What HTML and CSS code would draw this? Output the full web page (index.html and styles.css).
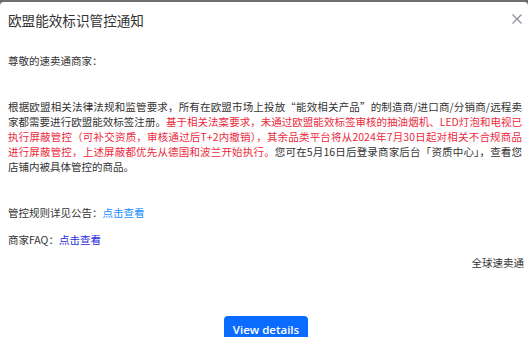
FILE: index.html
```html
<!DOCTYPE html>
<html lang="zh-CN">
<head>
<meta charset="utf-8">
<link rel="stylesheet" href="styles.css">
</head>
<body>
<div class="dialog">
  <div class="header">
    <div class="title">欧盟能效标识管控通知</div>
    <svg class="close" width="10" height="10" viewBox="0 0 10 10"><path d="M0.5 0.5 L9.5 9.5 M9.5 0.5 L0.5 9.5" stroke="#8c9099" stroke-width="1.2" fill="none"/></svg>
  </div>
  <div class="content">
    <p class="greet">尊敬的速卖通商家：</p>
    <p class="para">根据欧盟相关法律法规和监管要求，所有在欧盟市场上投放“能效相关产品”的制造商/进口商/分销商/远程卖家都需要进行欧盟能效标签注册。<span class="red">基于相关法案要求，未通过欧盟能效标签审核的抽油烟机、LED灯泡和电视已执行屏蔽管控（可补交资质，审核通过后T+2内撤销），其余品类平台将从2024年7月30日起对相关不合规商品进行屏蔽管控，上述屏蔽都优先从德国和波兰开始执行。</span>您可在5月16日后登录商家后台「资质中心」，查看您店铺内被具体管控的商品。</p>
    <p class="rule">管控规则详见公告：<a class="link" href="#">点击查看</a></p>
    <p class="faq">商家FAQ：<a class="link visited" href="#">点击查看</a></p>
    <p class="sign">全球速卖通</p>
  </div>
  <div class="footer">
    <button class="btn">View details</button>
  </div>
</div>
</body>
</html>
```
FILE: styles.css
```css
html, body {
  margin: 0;
  padding: 0;
  height: 100%;
  overflow: hidden;
}
body {
  background: #6e6e6e;
  font-family: "Noto Sans CJK SC", "Noto Sans", sans-serif;
  color: #333;
}
.dialog {
  margin-top: 2px;
  background: #fff;
  border-radius: 4px 4px 0 0;
  height: 335px;
  display: flex;
  flex-direction: column;
}
.header {
  display: flex;
  justify-content: space-between;
  align-items: center;
  padding: 8px 6px 0 8px;
  height: 20px;
}
.title {
  font-size: 13.6px;
  line-height: 20px;
  color: #333;
}
.close {
  display: block;
  margin-top: -2px;
}
.content {
  padding: 0 4px 0 8px;
  font-size: 10.5px;
  line-height: 15px;
}
.content p {
  margin: 0;
}
.greet {
  margin-top: 23px !important;
}
.para {
  margin-top: 31px !important;
  text-align: justify;
  padding-right: 2px;
}
.red {
  color: #eb2a3d;
}
.rule {
  margin-top: 31px !important;
}
.faq {
  margin-top: 11.5px !important;
}
.sign {
  margin-top: 8.5px !important;
  text-align: right;
}
.link {
  color: #1a8cff;
  text-decoration: none;
}
.link.visited {
  color: #2b2bdc;
}
.footer {
  display: flex;
  justify-content: center;
  padding-top: 46px;
}
.btn {
  background: #0a6cff;
  color: #fff;
  border: none;
  border-radius: 4px;
  font-family: "Open Sans", sans-serif;
  font-weight: 600;
  font-size: 11.5px;
  height: 26px;
  width: 84px;
  padding: 0;
  margin-left: 4px;
}
```
